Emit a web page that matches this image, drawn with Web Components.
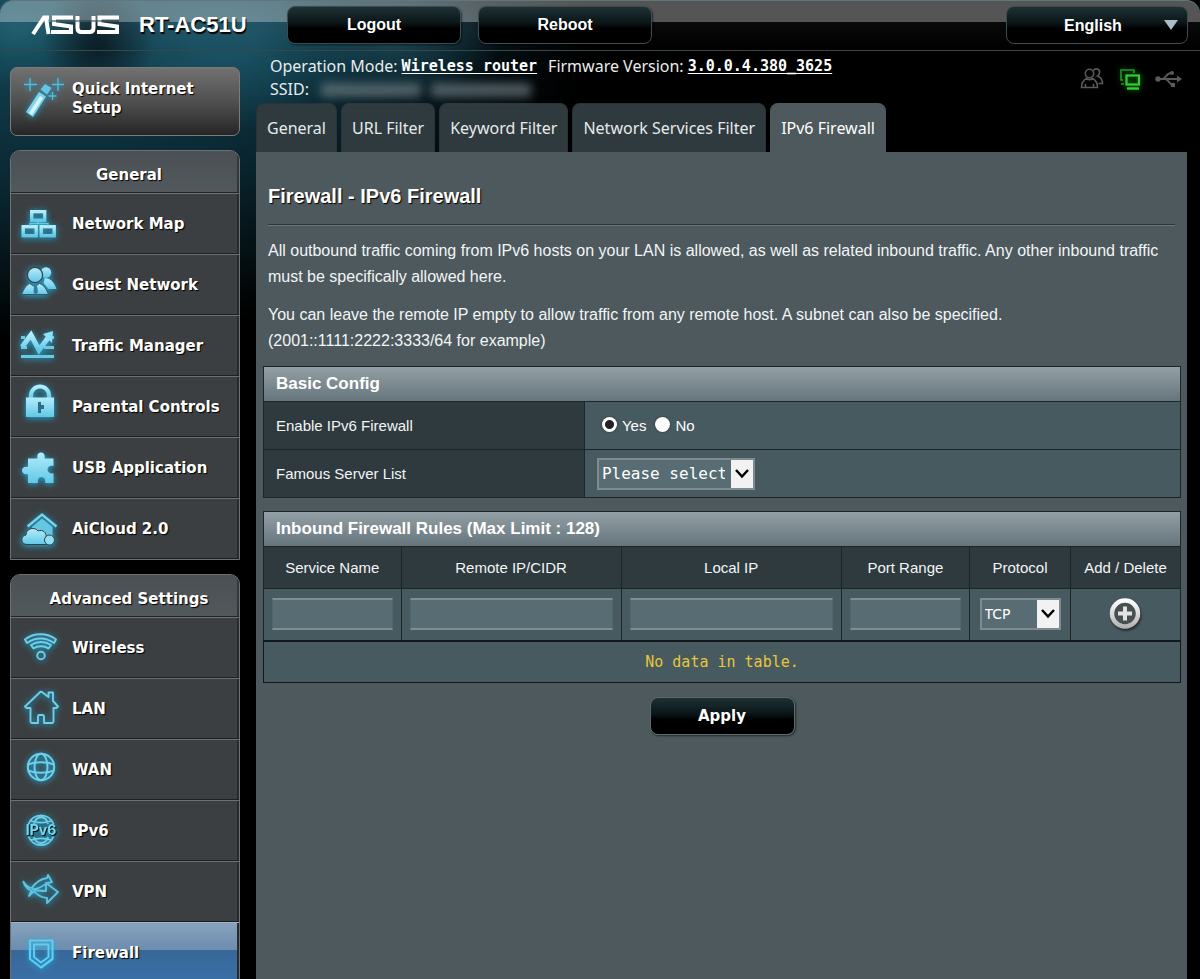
<!DOCTYPE html>
<html lang="en">
<head>
<meta charset="utf-8">
<meta name="viewport" content="width=device-width, initial-scale=1">
<title>RT-AC51U - IPv6 Firewall</title>
<style>
  body { margin: 0; background: #000; color: #fff; font-family: "Liberation Sans", Arial, sans-serif; font-size: 15px; }
</style>
</head>
<body>
<router-app>
  <top-bar slot="top"></top-bar>
  <nav-side slot="side"></nav-side>
  <status-line slot="status"></status-line>
  <tab-strip slot="tabs"></tab-strip>
  <content-panel>
    <basic-config></basic-config>
    <inbound-rules></inbound-rules>
    <action-button slot="actions" kind="apply">Apply</action-button>
  </content-panel>
</router-app>

<script>
const define = (name, html, setup) => {
  const tpl = document.createElement('template');
  tpl.innerHTML = html;
  customElements.define(name, class extends HTMLElement {
    constructor() {
      super();
      this.attachShadow({ mode: 'open' }).append(tpl.content.cloneNode(true));
    }
    connectedCallback() { if (setup) setup(this, this.shadowRoot); }
  });
};

const ICONS = {
  network: `<g fill="none" stroke="url(#g)" stroke-width="3.4"><rect x="11.7" y="7.7" width="13" height="8.6"/><rect x="3.2" y="22.7" width="13" height="9"/><rect x="21.2" y="22.7" width="13" height="9"/></g><path d="M18 17v2M10 22v-2.500h18V22" fill="none" stroke="#6cc9e4" stroke-width="1.500"/>`,
  guest: `<g fill="url(#g)"><circle cx="26" cy="7.500" r="5.200"/><path d="M25 13l4 1c4 2 6 6 7.500 10h-8l-5-6z"/><circle cx="15" cy="10" r="7.600" stroke="#3b3f41" stroke-width="1.200"/><path d="M1.500 29.500c2-5 4-9 8-11l5 3 5-3c5 2 7 6 9 11z" stroke="#3b3f41" stroke-width=".8"/></g><path d="M14 20.500h3l1 7-2.500 2-2-2z" fill="#2f7f9a"/>`,
  traffic: `<g stroke="#6cc9e4" stroke-width="2.800"><path d="M1 11.500h4M27 11.500h7M1 21.500h6M24 21.500h10M1 30.500h33"/></g><path d="M2 21l9-12 8 15 9-12" fill="none" stroke="url(#g)" stroke-width="5"/><path d="M23 8l10-3-1 12z" fill="#8fdff5"/>`,
  lock: `<path d="M11 12V8.500a9 9 0 0118 0V12" fill="none" stroke="url(#g)" stroke-width="4.200"/><rect x="6" y="10.500" width="28" height="19.500" fill="url(#g)"/><path d="M18 15h3v3h3v4h-3v4h-3z" fill="#2b6d84"/>`,
  puzzle: `<path d="M8 10.500h9.500c-2-8 9-8 7 0H33.500v7.500c-8-2-8 9 0 7.200V35h-8.500c2-8-9-8-7 0H8v-9c-8 2-8-9 0-7z" fill="url(#g)"/>`,
  cloud: `<path d="M7.500 17.500L22 5.500l14.500 12" fill="none" stroke="#78d3ec" stroke-width="2.400"/><path d="M12 18L22 9.500 32.500 18v13H12z" fill="#65c6e2"/><path d="M7 35.500c-7 0-6.500-9-1-9.500 0-7 9-8.500 12-4 5-2 9 2 8 6l1 7.500z" fill="url(#g)" stroke="#3b3f41"/><circle cx="29.500" cy="31" r="5" fill="#8fdff5" stroke="#3b3f41"/>`,
  wifi: `<g fill="none" stroke="#6fcfe9" stroke-width="1.900" stroke-linejoin="round"><circle cx="21" cy="27.500" r="3.800"/><path d="M5 11.500c9-7 22-7 31 0l-2 3.500c-8-6-19-6-27 0zM11 17c6-4 14-4 20 0l-2.500 3.500c-4-3-11-3-15 0z"/></g>`,
  house: `<path d="M10.500 19v13.500q0 1.500 1.500 1.500h6v-6.500q0-1.500 1.500-1.500h3q1.500 0 1.500 1.500V34h8q1.500 0 1.500-1.500V19h3l1.500-1.500L33 12V3.500h-4.500V8L22 3l-1.500-.2L5 17.500 6.500 19z" fill="none" stroke="#6fcfe9" stroke-width="1.900" stroke-linejoin="round"/>`,
  globe: `<g fill="none" stroke="#6fcfe9" stroke-width="2"><circle cx="21" cy="17" r="13.200"/><ellipse cx="21" cy="17" rx="6.500" ry="13.200"/><path d="M8 14.500c7-3 19-3 26 0M8 20.500c7 3 19 3 26 0"/></g>`,
  ipv6: `<g fill="none" stroke="#6fcfe9" stroke-width="1.800"><path d="M8.500 13a13.400 13.400 0 0125 0M8.500 25.500a13.400 13.400 0 0025 0M14 13c2-9 12-9 14 0M14 26c2 8 12 8 14 0M11 10c6 2 14 2 20 0M11 29c6-2 14-2 20 0"/></g><text x="21" y="24" text-anchor="middle" font-family="Inter, sans-serif" font-size="14" fill="#7ad6ee">IPv6</text>`,
  vpn: `<g fill="none" stroke="#5fc2de" stroke-width="1.900" stroke-linejoin="round"><path d="M3 9c3 5 6 7 9 7 3-5 9-9 15-10l1-3 4 7-6 1.500M3 9c2 6 5 9 8.500 9.500L9 24c3-3 4-4 5-5 3 4 8 6.500 13 7v5l11-11-12-9v4M12 17c5 1 9-2 14-5v7c-5 0-9-.5-12-1.500"/></g>`,
  shield: `<g fill="none" stroke="#5fcdf2" stroke-linejoin="round"><path d="M10 7.500h22.500v18.500L21 34.500 10 26z" stroke-width="2.200"/><path d="M14 11.500h14.500V24L21 29.500 14 24z" stroke-width="2"/></g>`
};

define('router-app', `
  <style>
    :host {
      display: grid; grid-template-rows: 51px minmax(0, 1fr); height: 100vh; box-sizing: border-box; overflow: hidden;
      background:
        radial-gradient(ellipse 56px 58px at 98px 42px, #08161dcc 10%, #08161d00 100%),
        radial-gradient(ellipse 80px 60px at 18px 30px, #1a5a6a 0, #1a5a6a00 100%),
        radial-gradient(ellipse 150px 90px at 225px 40px, #1a5264ee 20%, #16485a00 100%),
        radial-gradient(ellipse 110px 60px at 390px 40px, #173f4c 10%, #12374300 100%),
        radial-gradient(ellipse 530px 340px at 60px 0px, #16495a 0, #0a2832 55%, #00000000 100%),
        #000;
    }
    .body { display: grid; grid-template-columns: 230px minmax(0, 1fr); gap: 16px; padding: 0 13px 0 10px; min-height: 0; }
    .side { min-height: 0; overflow-y: auto; scrollbar-width: none; padding-top: 16px; }
    .main { display: flex; flex-direction: column; min-width: 0; min-height: 0; }
  </style>
  <slot name="top"></slot>
  <div class="body">
    <aside class="side"><slot name="side"></slot></aside>
    <main class="main"><slot name="status"></slot><slot name="tabs"></slot><slot></slot></main>
  </div>`);

define('action-button', `
  <style>
    :host { display: block; width: 174px; }
    button {
      display: block; width: 100%; height: 38px; padding: 0; border: 1px solid #3e4b4f; border-radius: 8px;
      background: linear-gradient(#1e3135, #0a1517 45%, #000 60%); color: #fff;
      font: bold 16px "Liberation Sans", Arial, sans-serif; text-shadow: 1px 1px 0 #000; box-shadow: 1px 1px 2px #0008;
    }
    :host([kind="apply"]) { width: 145px; }
    :host([kind="apply"]) button { font: bold 15px "DejaVu Sans", Verdana, sans-serif; border-color: #5d6b70; }
  </style>
  <button type="button"><slot></slot></button>`);

define('top-bar', `
  <style>
    :host { display: block; border-bottom: 1px solid #3b464a; border-radius: 14px 14px 0 0;
      background: linear-gradient(#ffffff55 0 22px, #ffffff0a 22px, #ffffff00); box-shadow: inset 0 1px 0 #60757e; }
    header { display: flex; align-items: center; height: 50px; padding: 0 12px 0 31px; box-sizing: border-box; }
    .logo { width: 88px; height: 20px; flex: none; }
    h1 { margin: 0 0 0 20px; width: 131px; font-size: 22px; line-height: 26px; text-shadow: 1px 2px 1px #000; white-space: nowrap; }
    .acts { display: flex; gap: 17px; margin-left: 17px; flex: 1; }
    select {
      appearance: none; width: 182px; height: 38px; border: 1px solid #3e4b4f; border-radius: 8px; padding: 0 16px 0 8px;
      background: url('data:image/svg+xml,<svg xmlns="http://www.w3.org/2000/svg" width="14" height="10"><path d="M0 0h14L7 10z" fill="%23a9bcc8"/></svg>') no-repeat right 9px center, linear-gradient(#1e3135, #0a1517 45%, #000 60%);
      color: #fff; font: bold 16px "Liberation Sans", Arial, sans-serif; text-align: center; text-align-last: center;
    }
  </style>
  <header>
    <svg class="logo" viewBox="0 0 88 20" role="img" aria-label="ASUS">
      <g fill="none" stroke="#fff" stroke-width="4">
        <path d="M2 19L13 2.500H18"/><path d="M15 2.500L17.500 19"/>
        <path d="M42 2.500H23v6.500L40 11.500v5.500H20"/>
        <path d="M46.500 1v12q0 4 4 4h8q4 0 4-4V1"/>
        <path d="M88 2.500H68.500v6.500L86 11.500v5.500H66"/>
      </g>
      <path d="M20 6h68" stroke="#16323c" stroke-width="1"/>
    </svg>
    <h1>RT-AC51U</h1>
    <div class="acts"><action-button>Logout</action-button><action-button>Reboot</action-button></div>
    <select aria-label="Language"><option>English</option></select>
  </header>`);

define('nav-item', `
  <style>
    :host { display: block; }
    a {
      display: flex; align-items: center; gap: 12px; height: 61px; box-sizing: border-box; padding: 0 8px 0 9px;
      border-top: 1px solid #6c7273; box-shadow: inset 0 -1px 0 #1d2021, inset -2px 0 0 #272b2c; background: #3b3f41;
      color: #fff; text-decoration: none; font: bold 15px/20px "DejaVu Sans", Verdana, sans-serif; text-shadow: 1px 1px 1px #000;
    }
    :host([current]) a { border-top-color: #9cb3c6; background: linear-gradient(#86a2bd, #6d8dae 27px, #376797 27px, #3a70a8); }
    svg { width: 40px; height: 40px; flex: none; overflow: visible; filter: drop-shadow(0 1px 3px #1cb0e0); }
  </style>
  <a href="#"><svg viewBox="0 0 40 40" aria-hidden="true"></svg><span><slot></slot></span></a>`,
  (el, root) => {
    root.querySelector('svg').innerHTML = `<defs><linearGradient id="g" x1="0" y1="0" x2="0" y2="1"><stop offset="0" stop-color="#b4ecfb"/><stop offset="1" stop-color="#62c8e8"/></linearGradient></defs>` + ICONS[el.getAttribute('icon')];
    if (el.hasAttribute('current')) root.querySelector('a').setAttribute('aria-current', 'page');
  });

define('nav-panel', `
  <style>
    :host { display: block; border: 1px solid #6c7273; border-radius: 10px 10px 0 0; overflow: hidden; background: #3b3f41; }
    h2 { margin: 0; height: 42px; padding-left: 8px; background: linear-gradient(#4a5053, #52595d); box-shadow: inset 0 -1px 0 #202425, inset -2px 0 0 #32383a;
      font: bold 15px/48px "DejaVu Sans", Verdana, sans-serif; text-align: center; text-shadow: 1px 1px 1px #000; }
  </style>
  <h2><slot name="title"></slot></h2><slot></slot>`);

define('nav-side', `
  <style>
    :host { display: flex; flex-direction: column; gap: 14px; }
    .quick { display: flex; align-items: center; gap: 12px; height: 69px; box-sizing: border-box; padding: 0 8px 5px 9px; border: 1px solid #7b7b7b; border-radius: 7px;
      background: linear-gradient(#717171, #505050 50%, #262626); color: #fff; text-decoration: none;
      font: bold 15px/19px "DejaVu Sans", Verdana, sans-serif; text-shadow: 1px 1px 1px #000; }
    .quick svg { width: 40px; height: 40px; flex: none; overflow: visible; filter: drop-shadow(0 1px 3px #1cb0e0cc); }
  </style>
  <a class="quick" href="#">
    <svg viewBox="0 0 40 40" aria-hidden="true">
      <path d="M6 33L19 13l7 4.500L13 38z" fill="#7ed4ee"/><path d="M9 34L20 17l3 2L12 36z" fill="#d8f6fd"/><path d="M20.500 10.500L25 5l6.500 4-4.500 6.500z" fill="#63c6e6"/>
      <path d="M10-1v13M4 5.500h13M38-1v13M32 5.500h12M32.500 13v8M28.500 17h8" stroke="#4bbfe6" stroke-width="1.400"/>
    </svg>
    <span>Quick Internet Setup</span>
  </a>
  <nav-panel><span slot="title">General</span>
    <nav-item icon="network">Network Map</nav-item>
    <nav-item icon="guest">Guest Network</nav-item>
    <nav-item icon="traffic">Traffic Manager</nav-item>
    <nav-item icon="lock">Parental Controls</nav-item>
    <nav-item icon="puzzle">USB Application</nav-item>
    <nav-item icon="cloud">AiCloud 2.0</nav-item>
  </nav-panel>
  <nav-panel><span slot="title">Advanced Settings</span>
    <nav-item icon="wifi">Wireless</nav-item>
    <nav-item icon="house">LAN</nav-item>
    <nav-item icon="globe">WAN</nav-item>
    <nav-item icon="ipv6">IPv6</nav-item>
    <nav-item icon="vpn">VPN</nav-item>
    <nav-item icon="shield" current>Firewall</nav-item>
  </nav-panel>`);

define('status-line', `
  <style>
    :host { display: flex; justify-content: space-between; align-items: center; height: 52px; padding: 0 7px 0 14px; box-sizing: border-box; color: #e8ecee;
      font: 16px/23px "Noto Sans", Tahoma, sans-serif; white-space: nowrap; }
    p { margin: 0; display: flex; align-items: center; }
    .text { padding-top: 2px; }
    a { color: #fff; font: bold 15px/23px "DejaVu Sans Mono", monospace; margin: 0 11px 0 4px; text-underline-offset: 2px; }
    .masked { display: flex; gap: 10px; margin-left: 12px; filter: blur(5px); }
    .masked i { height: 14px; background: #74838a; width: 100px; opacity: .65; }
    .icons { display: flex; gap: 14px; padding-top: 3px; }
    svg { width: 24px; height: 24px; fill: none; stroke: #5a5a5a; stroke-width: 1.600; overflow: visible; }
    .on { stroke: #2fd02f; filter: drop-shadow(0 0 3px #0a8a0a); }
  </style>
  <div class="text">
    <p>Operation Mode:<a href="#">Wireless router</a>Firmware Version:<a href="#">3.0.0.4.380_3625</a></p>
    <p>SSID:<span class="masked"><i></i><i></i></span></p>
  </div>
  <div class="icons">
    <svg viewBox="0 0 24 24" role="img" aria-label="Clients"><circle cx="9.500" cy="6.500" r="4.200"/><path d="M1.500 20.500c0-4 2-7.500 5-9 2 1.500 4 1.500 6 0 3 1.500 5 5 5 9zM5.500 20v-3M13.500 20v-3"/><path d="M13.500 3.500c2-3 6.500-1.500 6 2 0 1.500-1 3-2 3.500 3 1 5 4 5 7.500h-4"/></svg>
    <svg class="on" viewBox="0 0 24 24" role="img" aria-label="Connected"><path d="M5 13H3V3h13v3M3 17h3" opacity=".7"/><rect x="8.500" y="8.500" width="12.500" height="9" stroke-width="2.200"/><path d="M9 21.500h12" stroke-width="2.400"/></svg>
    <svg viewBox="0 0 24 24" role="img" aria-label="USB"><path d="M2 12h20M6 12c4 0 4-6 9-6M9 12c4 0 4 6 8 6" stroke-width="2"/><g fill="#5a5a5a" stroke="none"><circle cx="2" cy="12" r="2.700"/><circle cx="16" cy="6" r="2"/><rect x="15" y="16" width="4" height="4"/><path d="M21 8.500l5 3.500-5 3.500z"/></g></svg>
  </div>`);

define('tab-strip', `
  <style>
    :host { display: block; }
    nav { display: flex; gap: 4px; }
    a { padding: 0 10px; height: 49px; box-sizing: border-box; border: 1px solid #2a3438; border-bottom: 0; border-radius: 8px 8px 0 0; background: #2f3a3e;
      color: #e6eaec; text-decoration: none; font: 16px/48px "Noto Sans", Tahoma, sans-serif; white-space: nowrap; }
    a[aria-current] { background: #4d595d; border-color: #4d595d; color: #fff; }
  </style>
  <nav>
    <a href="#">General</a><a href="#">URL Filter</a><a href="#">Keyword Filter</a><a href="#">Network Services Filter</a><a href="#" aria-current="page">IPv6 Firewall</a>
  </nav>`);

define('content-panel', `
  <style>
    :host { display: flex; flex-direction: column; flex: 1; min-height: 0; overflow: auto; scrollbar-width: none; background: #4d595d; padding: 0 6px 0 7px; box-sizing: border-box; }
    section { padding: 0 6px 0 5px; }
    h2 { margin: 30px 0 14px; font-size: 20px; line-height: 28px; text-shadow: 1px 1px 1px #000; }
    hr { margin: 0 0 12px; border: 0; border-top: 1px solid #2b3438; border-bottom: 1px solid #6a767a; }
    p { margin: 0 0 12px; font-size: 16px; line-height: 26px; color: #f2f5f6; }
    .tables { display: flex; flex-direction: column; gap: 13px; }
    .actions { display: flex; justify-content: center; padding: 14px 0; }
  </style>
  <section>
    <h2>Firewall - IPv6 Firewall</h2>
    <hr>
    <p>All outbound traffic coming from IPv6 hosts on your LAN is allowed, as well as related inbound traffic. Any other inbound traffic must be specifically allowed here.</p>
    <p>You can leave the remote IP empty to allow traffic from any remote host. A subnet can also be specified.<br>(2001::1111:2222:3333/64 for example)</p>
  </section>
  <div class="tables"><slot></slot></div>
  <div class="actions"><slot name="actions"></slot></div>`);

const tableStyle = `
    :host { display: block; }
    table { width: 100%; border-collapse: collapse; table-layout: fixed; border: 1px solid #1c2529; background: #475a5f; }
    caption { box-sizing: border-box; height: 35px; padding-left: 12px; border: 1px solid #1c2529; border-bottom: 0; background: linear-gradient(#93a0a6, #66757c);
      font: bold 17px/34px "Liberation Sans", Arial, sans-serif; text-align: left; }
    th { background: #2f3a3e; font-weight: normal; }
    th, td { padding: 0; border: 1px solid #1c2529; box-sizing: border-box; }
    select { appearance: none; box-sizing: border-box; height: 32px; padding: 0 28px 0 3px; border: 2px solid #7f8b8f; border-radius: 0; color: #fff;
      background: url('data:image/svg+xml,<svg xmlns="http://www.w3.org/2000/svg" width="22" height="28"><path fill="%23f2f2f2" d="M0 0h22v28H0z"/><path d="M5 10l6 6.500L17 10" fill="none" stroke="%23000" stroke-width="2.500"/></svg>') no-repeat right center, #576d73; }
`;

define('basic-config', `
  <style>${tableStyle}
    th { width: 35%; height: 48px; padding-left: 12px; text-align: left; color: #f2f5f6; }
    td { padding-left: 12px; }
    .radios { display: flex; align-items: center; padding-left: 5px; }
    input { appearance: none; width: 15px; height: 15px; margin: 0 5px 2px 0; border-radius: 50%; background: #fff; box-shadow: 0 0 2px #222; }
    input:checked { background: radial-gradient(#222 0 4px, #fff 5px); }
    label { margin-right: 9px; }
    select { width: 158px; font: 16px "DejaVu Sans Mono", monospace; }
  </style>
  <table>
    <caption>Basic Config</caption>
    <tr><th scope="row">Enable IPv6 Firewall</th><td><div class="radios" role="radiogroup" aria-label="Enable IPv6 Firewall">
      <input type="radio" name="fw" id="yes" checked><label for="yes">Yes</label><input type="radio" name="fw" id="no"><label for="no">No</label></div></td></tr>
    <tr><th scope="row"><label for="famous">Famous Server List</label></th><td><select id="famous"><option>Please select</option></select></td></tr>
  </table>`);

define('inbound-rules', `
  <style>${tableStyle}
    th { height: 42px; color: #f2f5f6; }
    td { height: 52px; text-align: center; }
    .text { display: block; box-sizing: border-box; width: calc(100% - 16px); height: 32px; margin: 0 auto; border: 1px solid #52656b; border-top: 2px solid #7f8e93; border-bottom: 2px solid #7f8e93; background: #576d73; color: #fff; }
    select { width: 81px; font: 14px "DejaVu Sans", sans-serif; display: block; margin: 0 auto; }
    button { display: block; margin: 0 auto; width: 34px; height: 34px; padding: 0; border: 0; background: none; }
    svg { display: block; filter: drop-shadow(1px 2px 1px #0008); }
    tbody .empty { height: 42px; border-top: 2px solid #10181b; border-color: #10181b; color: #e8c63a; font: 15px "DejaVu Sans Mono", monospace; }
  </style>
  <table>
    <caption>Inbound Firewall Rules (Max Limit : 128)</caption>
    <colgroup><col style="width:15%"><col style="width:24%"><col style="width:24%"><col style="width:14%"><col style="width:11%"><col style="width:12%"></colgroup>
    <thead><tr><th scope="col">Service Name</th><th scope="col">Remote IP/CIDR</th><th scope="col">Local IP</th><th scope="col">Port Range</th><th scope="col">Protocol</th><th scope="col">Add / Delete</th></tr></thead>
    <tbody>
      <tr>
        <td><input class="text" type="text" aria-label="Service Name"></td>
        <td><input class="text" type="text" aria-label="Remote IP/CIDR"></td>
        <td><input class="text" type="text" aria-label="Local IP"></td>
        <td><input class="text" type="text" aria-label="Port Range"></td>
        <td><select aria-label="Protocol"><option>TCP</option></select></td>
        <td><button type="button" aria-label="Add">
          <svg width="34" height="34" viewBox="0 0 34 34"><defs><linearGradient id="m" x1="0" y1="0" x2="0" y2="1"><stop offset="0" stop-color="#fff"/><stop offset="1" stop-color="#b4b4b4"/></linearGradient></defs>
            <circle cx="17" cy="16.500" r="13" fill="#46504f" stroke="url(#m)" stroke-width="4.500"/><path d="M17 9.500v14M10 16.500h14" stroke="#e2e2e2" stroke-width="4"/></svg>
        </button></td>
      </tr>
      <tr><td class="empty" colspan="6">No data in table.</td></tr>
    </tbody>
  </table>`);
</script>
</body>
</html>
